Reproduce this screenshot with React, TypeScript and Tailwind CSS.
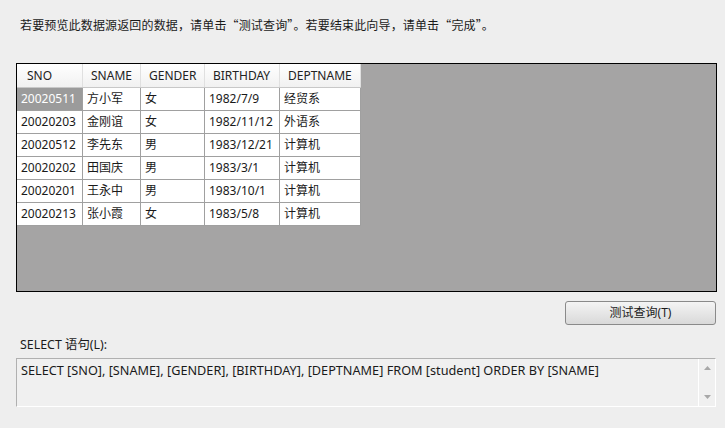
const font = { fontFamily: '"Noto Sans", "Noto Sans CJK SC", sans-serif' };
const cjk = { fontFamily: '"Noto Sans CJK SC", sans-serif' };

const cols = [
  { key: "SNO", w: "w-[66px]", pad: "pl-[10px]" },
  { key: "SNAME", w: "w-[58px]", pad: "pl-[8px]" },
  { key: "GENDER", w: "w-[64px]", pad: "pl-[8px]" },
  { key: "BIRTHDAY", w: "w-[75px]", pad: "pl-[8px]" },
  { key: "DEPTNAME", w: "w-[81px]", pad: "pl-[8px]" },
];

const rows = [
  ["20020511", "方小军", "女", "1982/7/9", "经贸系"],
  ["20020203", "金刚谊", "女", "1982/11/12", "外语系"],
  ["20020512", "李先东", "男", "1983/12/21", "计算机"],
  ["20020202", "田国庆", "男", "1983/3/1", "计算机"],
  ["20020201", "王永中", "男", "1983/10/1", "计算机"],
  ["20020213", "张小霞", "女", "1983/5/8", "计算机"],
];

export default function App() {
  return (
    <div
      className="w-[725px] h-[428px] bg-[#eeeeee] text-[12px] text-[#1a1a1a] leading-none flex flex-col"
      style={font}
    >
      <div className="pl-5 pt-[19px] h-[63px] tracking-[0.15px]" style={cjk}>
        若要预览此数据源返回的数据，请单击“测试查询”。若要结束此向导，请单击“完成”。
      </div>

      <div className="ml-4 w-[701px] h-[229px] border border-black bg-[#a5a4a4] flex flex-col">
        <div className="flex h-[24px] bg-gradient-to-b from-white to-[#f1f1f1] border-b border-[#c8c8c8] w-[344px]">
          {cols.map((c) => (
            <div
              key={c.key}
              className={`${c.w} ${c.pad} border-r border-[#e0e0e0] flex items-center text-[#222]`}
            >
              {c.key}
            </div>
          ))}
        </div>
        {rows.map((r, i) => (
          <div key={i} className="flex h-[23px] w-[344px] bg-white border-b border-[#a0a0a0]">
            {r.map((v, j) => (
              <div
                key={j}
                className={`${cols[j].w} border-r border-[#a0a0a0] flex items-center pl-[4px] ${
                  i === 0 && j === 0 ? "bg-[#9b9b9b] text-white" : ""
                }`}
              >
                {v}
              </div>
            ))}
          </div>
        ))}
      </div>

      <div className="flex justify-end pr-[9px] pt-[9px] h-[40px]">
        <button className="w-[151px] h-[24px] rounded-[3px] border border-[#8a8a8a] bg-gradient-to-b from-[#f4f4f4] to-[#d9d9d9] text-[12px] text-[#1a1a1a]">
          测试查询(T)
        </button>
      </div>

      <div className="pl-5 pt-[7px] h-[26px] text-[12.4px]">SELECT 语句(L):</div>

      <div className="ml-4 w-[700px] h-[49px] border border-[#b0b0b0] border-b-white border-r-white bg-[#f0f0f0] flex">
        <div className="flex-1 pl-[4px] pt-[5px] text-[12.7px]">
          SELECT [SNO], [SNAME], [GENDER], [BIRTHDAY], [DEPTNAME] FROM [student] ORDER BY [SNAME]
        </div>
        <div className="w-[17px] border-l border-white flex flex-col items-center justify-between py-[7px]">
          <svg width="7" height="4" viewBox="0 0 7 4">
            <path d="M0 4 L3.5 0 L7 4 Z" fill="#a8a8a8" />
          </svg>
          <svg width="7" height="4" viewBox="0 0 7 4">
            <path d="M0 0 L3.5 4 L7 0 Z" fill="#a8a8a8" />
          </svg>
        </div>
      </div>
    </div>
  );
}
